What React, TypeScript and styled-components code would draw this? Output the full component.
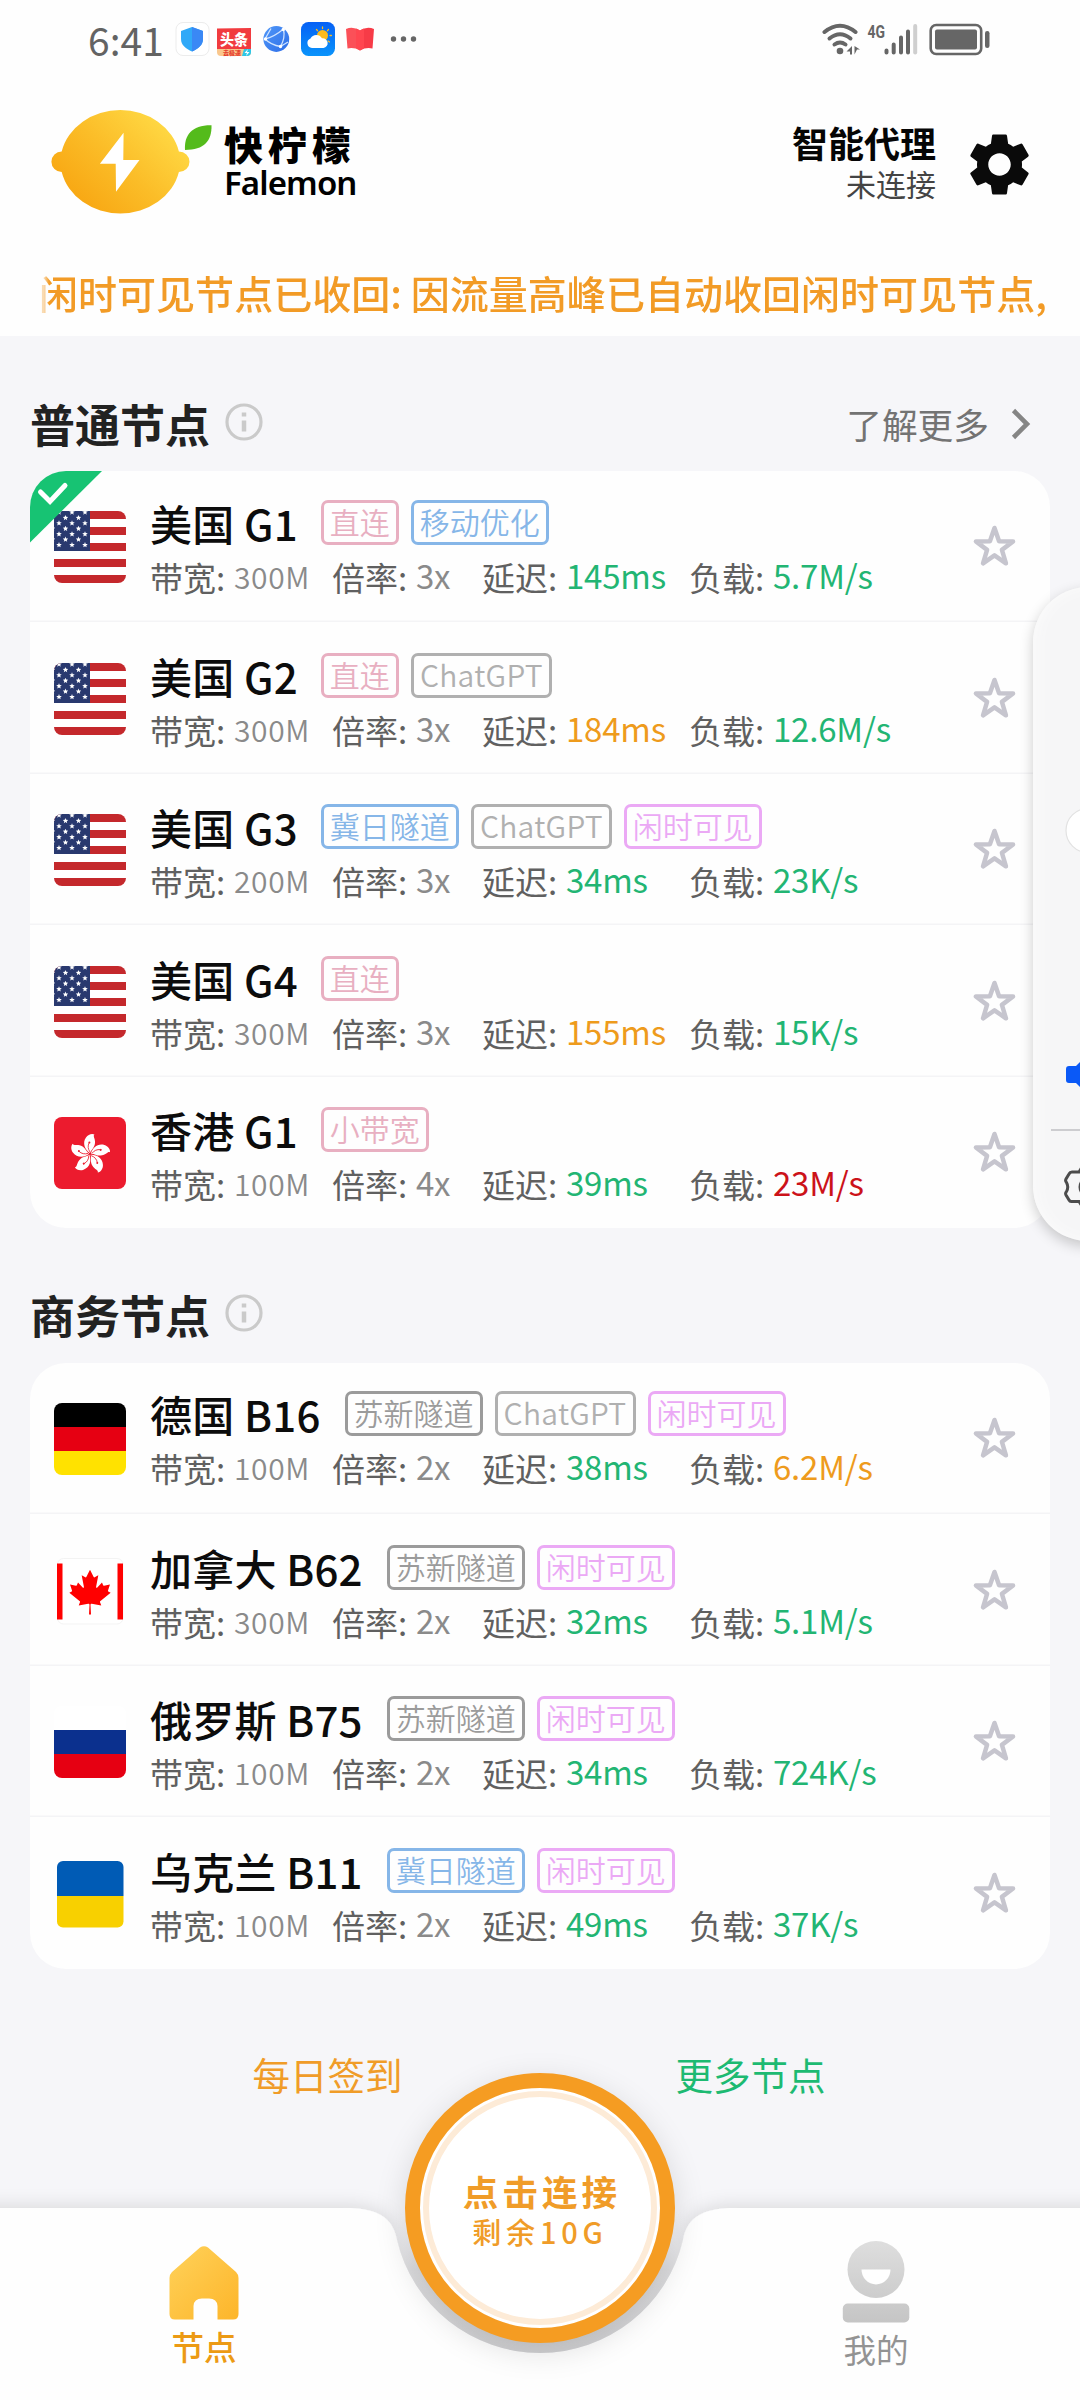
import React from "react";
import styled, { createGlobalStyle, css } from "styled-components";
import { MdSettings } from "react-icons/md";

const GREEN = "#22b573";
const ORANGE = "#ee9b1c";
const RED = "#cc1219";

const GlobalStyle = createGlobalStyle`
  * { box-sizing: border-box; }
  body { margin: 0; background: #f6f6f9; }
`;

const Screen = styled.div`
  position: relative;
  display: flex;
  flex-direction: column;
  width: 1080px;
  height: 2400px;
  overflow: hidden;
  background: #f6f6f9;
  color: #0c0c0c;
  font-family: "Noto Sans CJK SC", "Liberation Sans", sans-serif;
  white-space: nowrap;
`;

const TopArea = styled.header`
  height: 336px;
  flex: none;
  background: #fefefe;
`;

const StatusBar = styled.div`
  display: flex;
  align-items: flex-start;
  justify-content: space-between;
  height: 78px;
  padding: 18px 86px 0 88px;
`;

const StatusLeft = styled.div`
  display: flex;
  align-items: center;
  height: 42px;
`;

const Clock = styled.span`
  width: 87px;
  font-size: 39px;
  line-height: 42px;
  color: #636363;
`;

const StatusRight = styled.div`
  display: flex;
  height: 42px;
  align-items: center;
`;

const Brandbar = styled.div`
  display: flex;
  align-items: center;
  height: 167px;
  padding: 0 43px 0 51px;
`;

const BrandText = styled.div`
  display: flex;
  flex-direction: column;
  margin: -1px 0 0 10px;
`;

const BrandName = styled.span`
  font-size: 39px;
  font-weight: 900;
  line-height: 44px;
  letter-spacing: 5px;
  color: #000;
`;

const BrandLatin = styled.span`
  font-family: "Noto Sans", "Open Sans", sans-serif;
  font-size: 33px;
  font-weight: 600;
  line-height: 36px;
  letter-spacing: -0.9px;
  color: #000;
`;

const Mode = styled.div`
  display: flex;
  flex-direction: column;
  align-items: flex-end;
  margin: -1px 26px 0 auto;
`;

const ModeName = styled.span`
  font-size: 36px;
  font-weight: 700;
  line-height: 44px;
  color: #050505;
`;

const ModeState = styled.span`
  font-size: 30px;
  line-height: 38px;
  color: #444;
`;

const SettingsIcon = styled(MdSettings)`
  width: 75px;
  height: 75px;
  margin-top: 6px;
  color: #0a0a0a;
`;

const Notice = styled.div`
  height: 91px;
  margin: 0 30px 0 39px;
  font-size: 39px;
  font-weight: 500;
  line-height: 94px;
  letter-spacing: 0.03px;
  color: #f29b26;
  mask-image: linear-gradient(to right, rgba(0, 0, 0, 0.35) 5px, #000 10px);
`;

const Content = styled.main`
  flex: 1;
  padding: 0 30px;
`;

const SectionHead = styled.div`
  display: flex;
  align-items: center;
  height: 96px;
  margin-top: 39px;
`;

const SectionTitle = styled.h2`
  margin: 1px 0 0;
  font-size: 45px;
  font-weight: 700;
  line-height: 60px;
  color: #222;
`;

const InfoIcon = styled.svg`
  margin: -3px 0 0 15px;
`;

const LearnMore = styled.a`
  display: flex;
  align-items: center;
  gap: 22px;
  margin: 1px 19px 0 auto;
  font-size: 35.7px;
  color: #737373;
`;

const Card = styled.section`
  display: grid;
  grid-auto-rows: 151.4px;
  border-radius: 36px;
  overflow: hidden;
  background: #fefefe;
`;

const Row = styled.div`
  position: relative;
  display: flex;
  align-items: center;
  padding: 0 34px 0 24px;
  & + & { padding-top: 2px; }
  &:not(:last-child) { box-shadow: inset 0 -1.5px #f4f4f6; }
`;

const Selected = styled.svg`
  position: absolute;
  left: 0;
  top: 0;
`;

const FlagBox = styled.svg`
  flex: none;
  width: 72px;
  height: 72px;
`;

const Info = styled.div`
  flex: 1;
  align-self: flex-start;
  margin-left: 24px;
`;

const TitleLine = styled.div<{ $gap: number }>`
  display: flex;
  gap: 12px;
  height: 45px;
  margin-top: 28.5px;
  & > :first-child { margin-right: ${(p) => p.$gap}px; }
`;

const Name = styled.span`
  font-size: 42px;
  font-weight: 500;
  line-height: 46px;
  letter-spacing: 0.2px;
`;

type Tone = "pink" | "blue" | "gray" | "ash" | "violet";
const tones: Record<Tone, string> = {
  pink: "#e8afc1",
  blue: "#86b6e8",
  gray: "#b0b0b0",
  ash: "#9b9b9b",
  violet: "#eba9f5",
};

const Tag = styled.span<{ $tone: Tone }>`
  height: 45px;
  min-width: ${(p) => (p.$tone === "gray" ? 141 : 0)}px;
  padding: 0 6px;
  border: 3px solid ${(p) => tones[p.$tone]};
  border-radius: 7px;
  font-size: 30px;
  font-weight: 350;
  line-height: 37px;
  text-align: center;
  letter-spacing: ${(p) => (p.$tone === "gray" ? 0.3 : 0)}px;
  color: ${(p) => tones[p.$tone]};
`;

const Metrics = styled.div`
  display: grid;
  grid-template-columns: 182px 150px 207px auto;
  margin-top: 10px;
`;

const Metric = styled.div`
  display: flex;
  align-items: flex-start;
  height: 44px;
`;

const MetricLabel = styled.span`
  width: 84px;
  font-size: 33px;
  line-height: 44px;
  color: #606060;
`;

const MetricValue = styled.span<{ $color?: string; $small?: boolean }>`
  font-size: 33px;
  line-height: 41px;
  letter-spacing: -0.2px;
  color: ${(p) => p.$color ?? "#8a8a8a"};
  ${(p) => p.$small && css`
    font-size: 30px;
    line-height: 43px;
    font-weight: 350;
    letter-spacing: 0.6px;
  `}
`;

const StarIcon = styled.svg`
  flex: none;
`;

const Links = styled.div`
  display: flex;
  justify-content: center;
  gap: 273px;
  margin: 80px 2px 0 0;
`;

const QuickLink = styled.a<{ $color: string }>`
  font-size: 37.5px;
  line-height: 50px;
  color: ${(p) => p.$color};
`;

const TabBar = styled.nav`
  position: relative;
  display: flex;
  flex: none;
  justify-content: space-between;
  height: 192px;
  padding: 0 144px;
`;

const TabShape = styled.svg`
  position: absolute;
  left: 0;
  bottom: 0;
`;

const Tab = styled.div<{ $active?: boolean }>`
  position: relative;
  display: flex;
  flex-direction: column;
  align-items: center;
  width: 120px;
  padding-top: ${(p) => (p.$active ? 38 : 33)}px;
  font-size: 32.5px;
  font-weight: ${(p) => (p.$active ? 500 : 400)};
  line-height: 40px;
  color: ${(p) => (p.$active ? "#ec9a14" : "#939393")};
  svg { flex: none; margin-bottom: 6px; }
`;

const Connect = styled.button`
  position: absolute;
  left: 405px;
  top: 2073px;
  display: flex;
  flex-direction: column;
  align-items: center;
  width: 270px;
  height: 270px;
  padding: 81px 0 0;
  border: 15px solid #f59c22;
  border-radius: 50%;
  background: #fff;
  box-shadow: inset 0 0 0 3px #fff, inset 0 0 0 9px #fdebd7, 0 8px 32px rgba(0, 0, 0, 0.13);
  font-family: inherit;
  color: #f09c28;
`;

const ConnectTitle = styled.span`
  margin-left: 4px;
  font-size: 35.5px;
  font-weight: 700;
  line-height: 43px;
  letter-spacing: 4.1px;
`;

const ConnectSub = styled.span`
  font-size: 29px;
  font-weight: 500;
  line-height: 38px;
  letter-spacing: 4.8px;
`;

const SidePanel = styled.aside`
  position: absolute;
  left: 1033px;
  top: 587px;
  width: 110px;
  height: 654px;
  border-radius: 55px;
  background: #f6f6f7;
  box-shadow: 0 5px 14px rgba(0, 0, 0, 0.2), inset 3px 0 14px #fbfbfb;
`;

type FlagCode = "us" | "hk" | "de" | "ca" | "ru" | "ua";

const starPoints = (cx: number, cy: number, r: number, inner: number) =>
  Array.from({ length: 10 }, (_, i) => {
    const a = (Math.PI / 5) * i - Math.PI / 2;
    const d = i % 2 ? inner : r;
    return `${(cx + d * Math.cos(a)).toFixed(2)},${(cy + d * Math.sin(a)).toFixed(2)}`;
  }).join(" ");

const cantonRows = [1.3, 6.8, 12.2, 17.6, 23.1, 28.5, 34];

function Flag({ code }: { code: FlagCode }) {
  const id = React.useId();
  const clip = `url(#${id})`;
  const inset = code === "ca" || code === "ua";
  return (
    <FlagBox viewBox="0 0 72 72">
      <clipPath id={id}>
        {inset ? <rect x="3" y="3" width="66.5" height="66.5" rx="6" /> : <rect width="72" height="72" rx="8" />}
      </clipPath>
      {code === "us" && (
        <g clipPath={clip}>
          <rect width="72" height="72" fill="#fff" />
          {[0, 16, 32, 48, 64].map((y) => <rect key={y} y={y} width="72" height="8" fill="#c4282c" />)}
          <rect width="36" height="40" fill="#29396f" />
          {cantonRows.flatMap((y, r) =>
            (r % 2 ? [-1.5, 11.5, 24.5] : [5, 18, 31]).map((x) => (
              <polygon key={`${x}-${y}`} points={starPoints(x, y, 2.9, 1.3)} fill="#fff" />
            ))
          )}
        </g>
      )}
      {code === "hk" && (
        <g clipPath={clip}>
          <rect width="72" height="72" fill="#ec1b2e" />
          {[0, 72, 144, 216, 288].map((a) => (
            <g key={a} transform={`translate(36 37) rotate(${a})`}>
              <path d="M0-1C-5-4-8-11-4-16.5C-2-19.500 2-21 4.500-19.500C2.500-18 5.500-15.500 5-11C4.500-6 1.500-5 0-1Z" fill="#fff" />
              <path d="M0-2C-2-5-2.500-8-.8-11.500" fill="none" stroke="#ec1b2e" strokeWidth=".8" />
              <circle cx="-.6" cy="-11.500" r="1" fill="#ec1b2e" />
            </g>
          ))}
        </g>
      )}
      {code === "de" && (
        <g clipPath={clip}>
          <rect width="72" height="24" fill="#000" />
          <rect y="24" width="72" height="24" fill="#e60012" />
          <rect y="48" width="72" height="24" fill="#ffe200" />
        </g>
      )}
      {code === "ru" && (
        <g clipPath={clip}>
          <rect width="72" height="24" fill="#fff" />
          <rect y="24" width="72" height="24" fill="#0b308e" />
          <rect y="48" width="72" height="24" fill="#e60012" />
        </g>
      )}
      {code === "ua" && (
        <g clipPath={clip}>
          <rect width="72" height="38" fill="#005bb5" />
          <rect y="38" width="72" height="34" fill="#f8d000" />
        </g>
      )}
      {code === "ca" && (
        <g>
          <rect x="3.500" y="3.500" width="65.500" height="65.500" rx="6" fill="#fff" stroke="#f3f3f3" />
          <rect x="3" y="8.500" width="5.500" height="56" fill="#f00" />
          <rect x="63.500" y="8.500" width="5.500" height="56" fill="#f00" />
          <path
            transform="translate(36 37) scale(.0111)"
            fill="#f00"
            d="m-90 2030 45-863a95 95 0 0 0-111-98l-859 151 116-320a65 65 0 0 0-20-73l-941-762 212-99a65 65 0 0 0 34-79l-186-572 542 115a65 65 0 0 0 73-38l105-247 423 454a65 65 0 0 0 111-57l-204-1052 327 189a65 65 0 0 0 91-27l332-652 332 652a65 65 0 0 0 91 27l327-189-204 1052a65 65 0 0 0 111 57l423-454 105 247a65 65 0 0 0 73 38l542-115-186 572a65 65 0 0 0 34 79l212 99-941 762a65 65 0 0 0-20 73l116 320-859-151a95 95 0 0 0-111 98l45 863z"
          />
        </g>
      )}
    </FlagBox>
  );
}

interface NodeItem {
  flag: FlagCode;
  name: string;
  tags: [string, Tone][];
  band: string;
  rate: string;
  delay: [string, string];
  load: [string, string];
  selected?: boolean;
}

const direct: [string, Tone] = ["直连", "pink"];
const chat: [string, Tone] = ["ChatGPT", "gray"];
const idle: [string, Tone] = ["闲时可见", "violet"];
const jiri: [string, Tone] = ["冀日隧道", "blue"];
const suxin: [string, Tone] = ["苏新隧道", "ash"];

const normalNodes: NodeItem[] = [
  { flag: "us", name: "美国 G1", tags: [direct, ["移动优化", "blue"]], band: "300M", rate: "3x", delay: ["145ms", GREEN], load: ["5.7M/s", GREEN], selected: true },
  { flag: "us", name: "美国 G2", tags: [direct, chat], band: "300M", rate: "3x", delay: ["184ms", ORANGE], load: ["12.6M/s", GREEN] },
  { flag: "us", name: "美国 G3", tags: [jiri, chat, idle], band: "200M", rate: "3x", delay: ["34ms", GREEN], load: ["23K/s", GREEN] },
  { flag: "us", name: "美国 G4", tags: [direct], band: "300M", rate: "3x", delay: ["155ms", ORANGE], load: ["15K/s", GREEN] },
  { flag: "hk", name: "香港 G1", tags: [["小带宽", "pink"]], band: "100M", rate: "4x", delay: ["39ms", GREEN], load: ["23M/s", RED] },
];

const businessNodes: NodeItem[] = [
  { flag: "de", name: "德国 B16", tags: [suxin, chat, idle], band: "100M", rate: "2x", delay: ["38ms", GREEN], load: ["6.2M/s", ORANGE] },
  { flag: "ca", name: "加拿大 B62", tags: [suxin, idle], band: "300M", rate: "2x", delay: ["32ms", GREEN], load: ["5.1M/s", GREEN] },
  { flag: "ru", name: "俄罗斯 B75", tags: [suxin, idle], band: "100M", rate: "2x", delay: ["34ms", GREEN], load: ["724K/s", GREEN] },
  { flag: "ua", name: "乌克兰 B11", tags: [jiri, idle], band: "100M", rate: "2x", delay: ["49ms", GREEN], load: ["37K/s", GREEN] },
];

function NodeRow({ node }: { node: NodeItem }) {
  return (
    <Row>
      <Flag code={node.flag} />
      {node.selected && (
        <Selected width="73" height="72" viewBox="0 0 73 72">
          <path d="M0 0H72L0 71.500Z" fill="#17c373" />
          <path d="M10.500 21L20 30.500L35 14.500" fill="none" stroke="#fff" strokeWidth="5" strokeLinecap="round" />
        </Selected>
      )}
      <Info>
        <TitleLine $gap={node.name.length > 5 ? 12 : 11}>
          <Name>{node.name}</Name>
          {node.tags.map(([text, tone]) => <Tag key={text} $tone={tone}>{text}</Tag>)}
        </TitleLine>
        <Metrics>
          <Metric><MetricLabel>带宽:</MetricLabel><MetricValue $small>{node.band}</MetricValue></Metric>
          <Metric><MetricLabel>倍率:</MetricLabel><MetricValue>{node.rate}</MetricValue></Metric>
          <Metric><MetricLabel>延迟:</MetricLabel><MetricValue $color={node.delay[1]}>{node.delay[0]}</MetricValue></Metric>
          <Metric><MetricLabel>负载:</MetricLabel><MetricValue $color={node.load[1]}>{node.load[0]}</MetricValue></Metric>
        </Metrics>
      </Info>
      <StarIcon width="44" height="44" viewBox="0 0 44 44">
        <polygon points={starPoints(22.5, 22.5, 19.5, 7.8)} fill="none" stroke="#c6c5ce" strokeWidth="4.500" strokeLinejoin="round" />
      </StarIcon>
    </Row>
  );
}

function SectionHeader({ title, more }: { title: string; more?: string }) {
  return (
    <SectionHead>
      <SectionTitle>{title}</SectionTitle>
      <InfoIcon width="38" height="38" viewBox="0 0 38 38">
        <circle cx="19" cy="19" r="17" fill="none" stroke="#cacaca" strokeWidth="3.200" />
        <path d="M19 9.500V13.500M19 17.500V28.500" stroke="#cacaca" strokeWidth="4.500" />
      </InfoIcon>
      {more && (
        <LearnMore>
          {more}
          <svg width="20" height="32" viewBox="0 0 20 32">
            <path d="M2.500 2.500L16 16L2.500 29.500" fill="none" stroke="#858585" strokeWidth="4.600" />
          </svg>
        </LearnMore>
      )}
    </SectionHead>
  );
}

const ToutiaoText = styled.text`
  font-family: "Noto Sans CJK SC", sans-serif;
  font-weight: 900;
`;

function AppIcons() {
  return (
    <svg width="250" height="42" viewBox="175 18 250 42">
      <defs>
        <linearGradient id="weatherSky" x1="0" y1="0" x2="0" y2="1">
          <stop offset="0" stopColor="#0560f5" /><stop offset="1" stopColor="#0a94fb" />
        </linearGradient>
        <linearGradient id="globe" x1="0" y1="0" x2="1" y2="1">
          <stop offset="0" stopColor="#4f97f8" /><stop offset="1" stopColor="#2e6ee8" />
        </linearGradient>
      </defs>
      <rect x="176" y="22.500" width="33" height="33" rx="7" fill="#fff" stroke="#ececec" />
      <path d="M192 27L203 31V39C203 45 198 49 192 51.500C186 49 181 45 181 39V31Z" fill="#30a9f8" />
      <path d="M192 27L203 31V39C203 45 198 49 192 51.500Z" fill="#3a88f5" />
      <path d="M217 28.500L251 28V49H217Z" fill="#f13b3f" />
      <path d="M217 49H251V52Q251 56 247 56H221Q217 56 217 52Z" fill="#f9c78d" />
      <ToutiaoText x="234" y="44.500" fontSize="15" textAnchor="middle" textLength="28" lengthAdjust="spacingAndGlyphs" fill="#fff">头条</ToutiaoText>
      <ToutiaoText x="232" y="55" fontSize="6" textAnchor="middle" fill="#e6402f">去极速</ToutiaoText>
      <path d="M244 49H251V52Q251 56 247 56H242Z" fill="#2cc7e8" />
      <path d="M248 49L244.500 53H247L246 56L249.500 52H247Z" fill="#fff" />
      <circle cx="276.300" cy="39" r="12.900" fill="url(#globe)" />
      <g fill="none" stroke="#cfe3ff" strokeWidth="1.300">
        <path d="M265 39Q274 37 283.500 29M265 39Q271 45 280.500 46.500M283.500 29Q285.500 38 280.500 46.500M280.500 46.500L288 42M265 39L271 28.500" />
      </g>
      <g fill="#fff"><circle cx="265.500" cy="39" r="1.700" /><circle cx="283.300" cy="29.500" r="1.700" /><circle cx="280.500" cy="46.500" r="1.700" /></g>
      <rect x="301" y="22" width="34" height="34" rx="7.500" fill="url(#weatherSky)" />
      <circle cx="322.500" cy="35.500" r="5.500" fill="#fdbb1e" />
      <path d="M322.500 27V28.500M316.500 29.500L317.500 30.700M328.500 29.500L327.500 30.700M330 35.500H331.500M328 41L329.500 42" stroke="#fdbb1e" strokeWidth="1.300" strokeLinecap="round" />
      <path d="M312 48A5 5 0 0 1 310.500 38.400A6.500 6.500 0 0 1 322 38.300A4.900 4.900 0 0 1 323.500 48Z" fill="#fff" />
      <path d="M346 29Q353 26 360 30.500V50.500Q354 47 347.500 48.500Z" fill="#fb5058" />
      <path d="M374 29Q367 26 360 30.500V50.500Q366 47 372.500 48.500Z" fill="#f73b47" />
      <path d="M356 28.500Q358 29 360 30.500Q362 29 364 28.500V48Q362 49 360 50.500Q358 49 356 48Z" fill="#ff4650" />
      <g fill="#666"><circle cx="393.500" cy="39" r="2.700" /><circle cx="403.500" cy="39" r="2.700" /><circle cx="413.500" cy="39" r="2.700" /></g>
    </svg>
  );
}

const NetText = styled.text`
  font-family: "Roboto", sans-serif;
  font-weight: 700;
`;

function SignalIcons() {
  return (
    <svg width="174" height="42" viewBox="820 18 174 42">
      <g fill="none" stroke="#666" strokeWidth="4" strokeLinecap="round">
        <path d="M824.500 32Q840 19.500 855.500 32" />
        <path d="M829.500 38.500Q840 30 850.500 38.500" />
        <path d="M834.500 44.500Q840 40.500 845.500 44.500" />
      </g>
      <circle cx="840" cy="51" r="3.300" fill="#666" />
      <path d="M846.500 51.500L852 46V54.500H850V51.500ZM854.500 46L860 49.500H857L854.500 54.500Z" fill="#666" />
      <NetText x="867.500" y="37.500" fontSize="18.500" textLength="17.500" lengthAdjust="spacingAndGlyphs" fill="#666">4G</NetText>
      <g stroke="#666" strokeWidth="4" strokeLinecap="round">
        <path d="M886.500 50.500V52.500M893.700 44.500V52.500M901 37.500V52.500M908 31.500V52.500" />
        <path d="M915.200 26V52.500" stroke="#cfcfcf" />
      </g>
      <rect x="930.700" y="25" width="50.500" height="29" rx="5.500" fill="none" stroke="#666" strokeWidth="2.600" />
      <rect x="935" y="29.500" width="42" height="20" rx="2" fill="#666" />
      <rect x="985" y="31" width="4.500" height="17" rx="2.200" fill="#666" />
    </svg>
  );
}

function LemonLogo() {
  return (
    <svg width="163" height="106" viewBox="51 109 163 106">
      <defs>
        <linearGradient id="lemon" x1="0" y1=".9" x2=".9" y2=".2">
          <stop offset="0" stopColor="#f7a00c" /><stop offset=".55" stopColor="#fbbd28" /><stop offset="1" stopColor="#ffd944" />
        </linearGradient>
      </defs>
      <path
        fill="url(#lemon)"
        d="M61.700 151.500A60 52.700 0 0 1 178.900 151.500A10.600 10.250 0 0 1 178.900 172A60 52.700 0 0 1 61.700 172A10.300 10.250 0 0 1 61.700 151.500Z"
      />
      <path d="M123.600 132.700L99.900 163.700H115.700L116 191.700L139.500 160H123.300Z" fill="#fff" />
      <path d="M185 150C184 135 192 125 211.500 125.300C212 141 204 150 185 150Z" fill="#54bb1b" />
    </svg>
  );
}

function TabBackground() {
  return (
    <TabShape width="1080" height="240" viewBox="0 2160 1080 240">
      <defs>
        <linearGradient id="notch" x1="0" y1="2212" x2="0" y2="2355" gradientUnits="userSpaceOnUse">
          <stop offset="0" stopColor="#f0f0f3" stopOpacity="0" />
          <stop offset=".4" stopColor="#dcdcde" />
          <stop offset="1" stopColor="#d0d0d2" />
        </linearGradient>
        <filter id="lift" x="-5%" y="-20%" width="110%" height="140%">
          <feDropShadow dx="0" dy="-2" stdDeviation="9" floodColor="#000" floodOpacity=".12" />
        </filter>
      </defs>
      <path
        filter="url(#lift)"
        fill="#fefefe"
        d="M-40 2208H345C378 2208 393 2218 397 2240A147 147 0 0 0 683 2240C687 2218 702 2208 735 2208H1120V2440H-40Z"
      />
      <path d="M392 2212Q396 2225 397 2240A147 147 0 0 0 683 2240Q684 2225 688 2212Z" fill="url(#notch)" />
    </TabShape>
  );
}

export default function App() {
  return (
    <Screen>
      <GlobalStyle />
      <TopArea>
        <StatusBar>
          <StatusLeft><Clock>6:41</Clock><AppIcons /></StatusLeft>
          <StatusRight><SignalIcons /></StatusRight>
        </StatusBar>
        <Brandbar>
          <LemonLogo />
          <BrandText>
            <BrandName>快柠檬</BrandName>
            <BrandLatin>Falemon</BrandLatin>
          </BrandText>
          <Mode>
            <ModeName>智能代理</ModeName>
            <ModeState>未连接</ModeState>
          </Mode>
          <SettingsIcon />
        </Brandbar>
        <Notice>闲时可见节点已收回: 因流量高峰已自动收回闲时可见节点,</Notice>
      </TopArea>
      <Content>
        <SectionHeader title="普通节点" more="了解更多" />
        <Card>{normalNodes.map((n) => <NodeRow key={n.name} node={n} />)}</Card>
        <SectionHeader title="商务节点" />
        <Card>{businessNodes.map((n) => <NodeRow key={n.name} node={n} />)}</Card>
        <Links>
          <QuickLink $color="#f09c28">每日签到</QuickLink>
          <QuickLink $color="#1dba72">更多节点</QuickLink>
        </Links>
      </Content>
      <TabBar>
        <TabBackground />
        <Tab $active>
          <svg width="70" height="74" viewBox="0 0 70 74">
            <defs>
              <linearGradient id="home" x1="0" y1="0" x2="1" y2="1">
                <stop offset="0" stopColor="#ffd25a" /><stop offset="1" stopColor="#fdb52a" />
              </linearGradient>
            </defs>
            <path fill="url(#home)" d="M31 1.500Q35-1 39 1.500L67 26Q69.500 28.500 69.500 32V68Q69.500 73.500 64 73.500H48.500V60Q48 52.500 40 52.500H33Q25 52.500 24.500 60V73.500H6Q.5 73.500 .5 68V32Q.5 28.500 3 26Z" />
          </svg>
          节点
        </Tab>
        <Tab>
          <svg width="68" height="82" viewBox="0 0 68 82">
            <defs>
              <linearGradient id="user" x1="0" y1="0" x2="0" y2="82" gradientUnits="userSpaceOnUse">
                <stop offset="0" stopColor="#dedede" /><stop offset="1" stopColor="#c5c5c5" />
              </linearGradient>
            </defs>
            <circle cx="34" cy="28.500" r="28.500" fill="url(#user)" />
            <path d="M19.500 28.500H48.500A14.500 15 0 0 1 19.500 28.500Z" fill="#fff" />
            <rect x=".8" y="62.500" width="66.500" height="19" rx="5" fill="url(#user)" />
          </svg>
          我的
        </Tab>
      </TabBar>
      <Connect>
        <ConnectTitle>点击连接</ConnectTitle>
        <ConnectSub>剩余10G</ConnectSub>
      </Connect>
      <SidePanel>
        <svg width="47" height="654" viewBox="1033 587 47 654">
          <circle cx="1088" cy="830.500" r="22" fill="#fff" stroke="#e2e2e2" strokeWidth="1.200" />
          <path d="M1080 1062L1076 1066H1069Q1066 1066 1066 1069V1080Q1066 1083 1069 1083H1076L1080 1087Z" fill="#0a59f7" />
          <path d="M1051 1130H1080" stroke="#c4c4c6" strokeWidth="1.600" />
          <path d="M1082 1167L1079 1172H1072Q1070 1172 1069 1174L1066 1179Q1065 1181 1066.500 1182.500Q1069 1187 1066.500 1191.500Q1065 1193 1066 1195L1069 1200Q1070 1202 1072 1201.500H1079L1082 1206" fill="none" stroke="#4c4c4c" strokeWidth="3" />
          <circle cx="1089" cy="1187" r="9" fill="none" stroke="#4c4c4c" strokeWidth="3" />
        </svg>
      </SidePanel>
    </Screen>
  );
}
